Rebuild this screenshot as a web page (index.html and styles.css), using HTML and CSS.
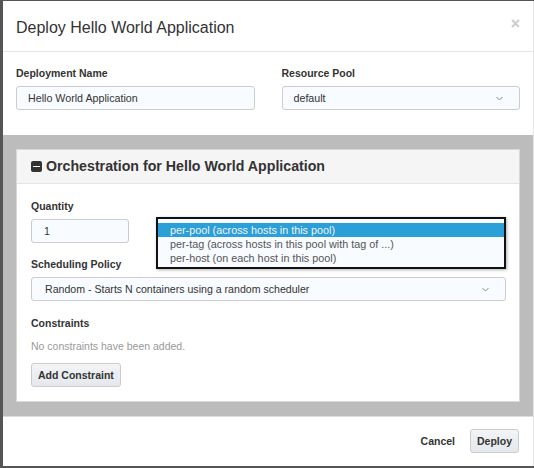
FILE: index.html
```html
<!DOCTYPE html>
<html lang="en">
<head>
    <meta charset="UTF-8">
    <meta name="viewport" content="width=device-width, initial-scale=1.0">
    <title>Deploy Hello World Application</title>
    <link rel="stylesheet" href="styles.css">
</head>
<body>
    <div class="modal">
        <div class="modal-header">
            <h4 class="modal-title">Deploy Hello World Application</h4>
            <span class="close">&times;</span>
        </div>

        <div class="modal-top">
            <div class="field">
                <label>Deployment Name</label>
                <div class="input">Hello World Application</div>
            </div>
            <div class="field">
                <label>Resource Pool</label>
                <div class="input select">default
                    <svg class="chevron" width="7" height="5" viewBox="0 0 7 5"><path d="M0.5 1 L3.5 4 L6.5 1" fill="none" stroke="#888" stroke-width="1"/></svg>
                </div>
            </div>
        </div>

        <div class="nested">
            <div class="panel">
                <div class="panel-heading">
                    <span class="minus"></span>
                    Orchestration for Hello World Application
                </div>
                <div class="panel-body">
                    <label>Quantity</label>
                    <div class="quantity-row">
                        <div class="input quantity">1</div>
                    </div>

                    <label>Scheduling Policy</label>
                    <div class="input select">Random - Starts N containers using a random scheduler
                        <svg class="chevron" width="7" height="5" viewBox="0 0 7 5"><path d="M0.5 1 L3.5 4 L6.5 1" fill="none" stroke="#888" stroke-width="1"/></svg>
                    </div>

                    <label>Constraints</label>
                    <p class="empty">No constraints have been added.</p>
                    <button class="btn">Add Constraint</button>

                    <!-- open native select popup -->
                    <ul class="popup">
                        <li class="active">per-pool (across hosts in this pool)</li>
                        <li>per-tag (across hosts in this pool with tag of ...)</li>
                        <li>per-host (on each host in this pool)</li>
                    </ul>
                </div>
            </div>
        </div>

        <div class="modal-footer">
            <button class="btn-link">Cancel</button>
            <button class="btn">Deploy</button>
        </div>
    </div>
</body>
</html>
```

FILE: styles.css
```css
body {
    margin: 0;
    padding: 1px 0 0 3px;
    background-color: #555;
    font-family: "Liberation Sans", Arial, sans-serif;
    color: #333;
    font-size: 11px;
}

.modal {
    width: 530px;
    height: 465px;
    background-color: white;
    border-right: 1px solid #e5e5e5;
    display: flex;
    flex-direction: column;
}

.modal-header {
    box-sizing: border-box;
    height: 52px;
    padding: 5px 13px 0 13px;
    border-bottom: 1px solid #e5e5e5;
    display: flex;
    align-items: center;
    justify-content: space-between;
}

.modal-title {
    margin: 0;
    font-size: 16px;
    font-weight: normal;
    color: #333;
}

.close {
    font-size: 16px;
    font-weight: bold;
    color: #ccc;
    margin-top: -8px;
    margin-right: 0;
}

label {
    display: block;
    font-weight: bold;
    font-size: 10.5px;
    line-height: 14px;
    margin-bottom: 6px;
}

.modal-top {
    display: grid;
    grid-template-columns: 1fr 1fr;
    gap: 27px;
    padding: 14px 13px 25px 13px;
}

.input {
    position: relative;
    box-sizing: border-box;
    height: 24px;
    line-height: 22px;
    padding: 0 11px;
    border: 1px solid #ccc;
    border-radius: 3px;
    background-color: #f8fbff;
    color: #333;
    font-size: 10.7px;
}

.chevron {
    position: absolute;
    right: 16px;
    top: 9px;
}

.nested {
    flex: 1;
    background-color: #bcbcbc;
    border-bottom: 1px solid #ddd;
    padding: 14px 13px 14px 13px;
}

.panel {
    background-color: white;
    border: 1px solid #d8d8d8;
}

.panel-heading {
    height: 33px;
    padding: 0 14px;
    background-color: #f5f5f5;
    border-bottom: 1px solid #e5e5e5;
    display: flex;
    align-items: center;
    font-size: 14.2px;
    font-weight: bold;
    color: #333;
}

.minus {
    position: relative;
    width: 11px;
    height: 11px;
    border-radius: 2px;
    background-color: #333;
    margin-right: 4px;
}

.minus::after {
    content: "";
    position: absolute;
    left: 2px;
    right: 2px;
    top: 5px;
    height: 1px;
    background-color: white;
}

.panel-body {
    position: relative;
    padding: 15px 13px 14px 14px;
}

.quantity-row {
    margin-bottom: 14px;
}

.quantity {
    width: 98px;
    padding-left: 12px;
}

.panel-body .select {
    padding-left: 13px;
    margin-bottom: 15px;
    font-size: 10.6px;
}

.empty {
    margin: 9px 0 10px 0;
    color: #999;
    font-size: 10.5px;
    line-height: 14px;
}

.btn {
    height: 24px;
    padding: 0 6px;
    border: 1px solid #ccc;
    border-radius: 3px;
    background: linear-gradient(#f2f4f6, #e4e8ec);
    font-family: "Liberation Sans", Arial, sans-serif;
    font-size: 10.5px;
    font-weight: bold;
    color: #333;
}

.btn-link {
    border: none;
    background: none;
    font-family: "Liberation Sans", Arial, sans-serif;
    font-size: 10.5px;
    font-weight: bold;
    color: #333;
    padding: 0;
    margin-right: 15px;
}

.popup {
    position: absolute;
    left: 139px;
    top: 33px;
    width: 346px;
    margin: 0;
    padding: 4px 0 2px 0;
    list-style: none;
    border: 2px solid #111;
    background-color: #f8fbff;
    box-shadow: 1px 1px 3px rgba(0, 0, 0, 0.3);
}

.popup li {
    height: 14px;
    line-height: 14px;
    padding: 0 12px;
    font-size: 10.8px;
    color: #555;
}

.popup .active {
    background-color: #2a9fd8;
    color: #f2f2f2;
}

.modal-footer {
    height: 51px;
    padding: 0 14px;
    display: flex;
    align-items: center;
    justify-content: flex-end;
}
```
